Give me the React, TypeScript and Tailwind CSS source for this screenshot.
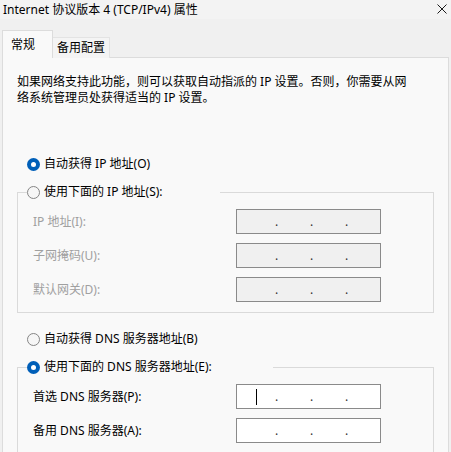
import React from "react";

const FONT = { fontFamily: "'Noto Sans', 'Noto Sans CJK SC', sans-serif" };

function Radio({ checked }: { checked?: boolean }) {
  return checked ? (
    <span className="flex h-[13px] w-[13px] shrink-0 items-center justify-center rounded-full bg-[#005fb8]">
      <span className="h-[5px] w-[5px] rounded-full bg-white" />
    </span>
  ) : (
    <span className="h-[13px] w-[13px] shrink-0 rounded-full border border-[#858585] bg-[#f6f6f6]" />
  );
}

function IpBox({ disabled, caret }: { disabled?: boolean; caret?: boolean }) {
  return (
    <div
      className={`flex h-[25px] w-[145px] items-center border ${
        disabled ? "border-[#8a8a8a] bg-[#f0f0f0]" : "border-[#8a8a8a] bg-white"
      }`}
    >
      <div className="flex w-[38px] items-center">
        {caret && <span className="ml-[19px] h-[16px] w-[1px] bg-black" />}
      </div>
      <span className="w-[35px] text-[12px] leading-[16px] text-[#333]">.</span>
      <span className="w-[35px] text-[12px] leading-[16px] text-[#333]">.</span>
      <span className="text-[12px] leading-[16px] text-[#333]">.</span>
    </div>
  );
}

function Row({ label, disabled, caret }: { label: string; disabled?: boolean; caret?: boolean }) {
  return (
    <div className="flex h-[25px] items-center">
      <span className={`w-[203px] ${disabled ? "text-[#a0a0a0]" : "text-black"}`}>{label}</span>
      <IpBox disabled={disabled} caret={caret} />
    </div>
  );
}

export default function App() {
  return (
    <div
      className="h-[452px] w-[451px] overflow-hidden bg-[#f0f0f0] text-[12px] leading-[16px] text-black"
      style={FONT}
    >
      {/* Title bar */}
      <div className="flex h-[19px] items-center justify-between bg-[#f3f3f3] pl-[3px] pr-[4px]">
        <span>Internet 协议版本 4 (TCP/IPv4) 属性</span>
        <svg width="10" height="10" viewBox="0 0 10 10" className="mt-[-2px]">
          <path d="M0.5 0.5 L9.5 9.5 M9.5 0.5 L0.5 9.5" stroke="#1a1a1a" strokeWidth="1" />
        </svg>
      </div>
      <div className="h-[11px] bg-[#f0f0f0]" />

      {/* Tabs */}
      <div className="relative z-10 flex items-end pl-[2px]">
        <div className="flex h-[28px] w-[51px] items-center border-x border-t border-[#dcdcdc] bg-[#f9f9f9] pl-[8px]">
          常规
        </div>
        <div className="flex h-[21px] w-[57px] items-center border-r border-t border-[#e3e3e3] bg-[#f4f4f4] pl-[4px] pb-[1px]">
          备用配置
        </div>
      </div>

      {/* Panel */}
      <div className="mx-[2px] mt-[-1px] h-[400px] border border-[#dcdcdc] bg-[#f9f9f9] pl-[14px] pt-[16px]">
        <p className="leading-[16px]">
          如果网络支持此功能，则可以获取自动指派的 IP 设置。否则，你需要从网
          <br />
          络系统管理员处获得适当的 IP 设置。
        </p>

        <div className="ml-[10px] mt-[48px] flex h-[20px] items-center gap-[4px]">
          <Radio checked />
          <span>自动获得 IP 地址(O)</span>
        </div>

        <fieldset className="mt-[8px] w-[417px] border border-[#dadada] pb-[10px] pl-[15px]">
          <legend className="ml-[-6px] flex h-[20px] w-[193px] items-center gap-[4px]">
            <Radio />
            <span>使用下面的 IP 地址(S):</span>
          </legend>
          <div className="flex flex-col gap-[9px] pt-[7px]">
            <Row label="IP 地址(I):" disabled />
            <Row label="子网掩码(U):" disabled />
            <Row label="默认网关(D):" disabled />
          </div>
        </fieldset>

        <div className="ml-[10px] mt-[16px] flex h-[20px] items-center gap-[4px]">
          <Radio />
          <span>自动获得 DNS 服务器地址(B)</span>
        </div>

        <fieldset className="mt-[8px] w-[417px] border border-[#dadada] pb-[10px] pl-[15px]">
          <legend className="ml-[-6px] flex h-[20px] w-[246px] items-center gap-[4px]">
            <Radio checked />
            <span>使用下面的 DNS 服务器地址(E):</span>
          </legend>
          <div className="flex flex-col gap-[9px] pt-[7px]">
            <Row label="首选 DNS 服务器(P):" caret />
            <Row label="备用 DNS 服务器(A):" />
          </div>
        </fieldset>
      </div>
    </div>
  );
}
